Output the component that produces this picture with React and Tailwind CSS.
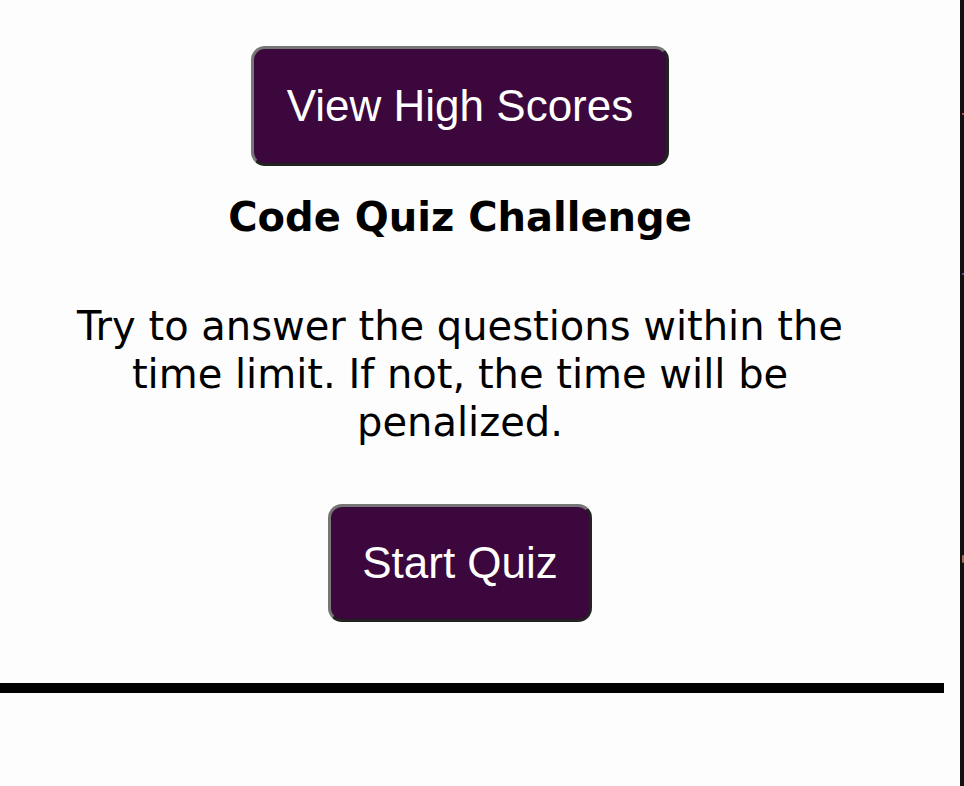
export default function App() {
    return (
        <div className="flex h-[786px] w-[964px] overflow-hidden bg-[#fdfdfd]">
            <div className="flex w-[960px] flex-col">
                <div className="flex w-[920px] flex-col items-center pt-[46px]">
                    <button className="h-[120px] rounded-[14px] border-[3px] border-t-[#767676] border-l-[#767676] border-r-[#222] border-b-[#222] bg-[#3b073d] px-[33px] font-['Liberation_Sans',Arial,sans-serif] text-[44px] leading-none text-white">
                        View High Scores
                    </button>

                    <h1 className="mt-[28px] font-['DejaVu_Sans',Verdana,sans-serif] text-[40px] font-bold leading-[46px] text-black">
                        Code Quiz Challenge
                    </h1>

                    <p className="mt-[62px] max-w-[800px] text-center font-['DejaVu_Sans',Verdana,sans-serif] text-[40px] leading-[48px] text-black">
                        Try to answer the questions within the time limit. If not, the time will be penalized.
                    </p>

                    <button className="mt-[58px] h-[118px] rounded-[14px] border-[3px] border-t-[#767676] border-l-[#767676] border-r-[#222] border-b-[#222] bg-[#3b073d] px-[31px] font-['Liberation_Sans',Arial,sans-serif] text-[44px] leading-none text-white">
                        Start Quiz
                    </button>
                </div>

                {/* divider */}
                <div className="mt-[61px] h-[10px] w-[944px] bg-black"></div>
            </div>

            {/* right edge strip */}
            <div className="relative h-full w-[4px] bg-[#111]">
                <div className="absolute left-[2px] top-[113px] h-[2px] w-[2px] bg-[#b44]"></div>
                <div className="absolute left-[2px] top-[273px] h-[2px] w-[2px] bg-[#648]"></div>
                <div className="absolute left-[2px] top-[555px] h-[8px] w-[2px] rounded-full bg-[#a65]"></div>
            </div>
        </div>
    );
}
